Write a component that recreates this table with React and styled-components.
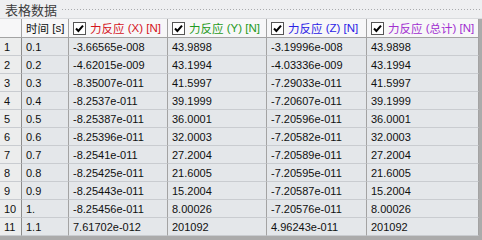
import styled, { createGlobalStyle } from "styled-components";

const GlobalStyle = createGlobalStyle`
  html, body {
    margin: 0;
    padding: 0;
    background: #ababab;
  }
  body {
    font-family: "Liberation Sans", "Noto Sans CJK SC", sans-serif;
  }
`;

const rows = [
  ["0.1", "-3.66565e-008", "43.9898", "-3.19996e-008", "43.9898"],
  ["0.2", "-4.62015e-009", "43.1994", "-4.03336e-009", "43.1994"],
  ["0.3", "-8.35007e-011", "41.5997", "-7.29033e-011", "41.5997"],
  ["0.4", "-8.2537e-011", "39.1999", "-7.20607e-011", "39.1999"],
  ["0.5", "-8.25387e-011", "36.0001", "-7.20596e-011", "36.0001"],
  ["0.6", "-8.25396e-011", "32.0003", "-7.20582e-011", "32.0003"],
  ["0.7", "-8.2541e-011", "27.2004", "-7.20589e-011", "27.2004"],
  ["0.8", "-8.25425e-011", "21.6005", "-7.20595e-011", "21.6005"],
  ["0.9", "-8.25443e-011", "15.2004", "-7.20587e-011", "15.2004"],
  ["1.", "-8.25456e-011", "8.00026", "-7.20576e-011", "8.00026"],
  ["1.1", "7.61702e-012", "201092", "4.96243e-011", "201092"],
];

const forceColumns = [
  { axis: "X", color: "#d4141c" },
  { axis: "Y", color: "#1f9a22" },
  { axis: "Z", color: "#2a22e6" },
  { axis: "总计", color: "#a12fd0" },
];

export default function App() {
  return (
    <>
      <GlobalStyle />
      <Panel>
        <TitleBar>
          <Title>表格数据</Title>
          <Dots />
        </TitleBar>
        <Grid>
          <HeadCell />
          <HeadCell>
            <Cjk>时间</Cjk>&nbsp;[s]
          </HeadCell>
          {forceColumns.map((c) => (
            <HeadCell key={c.axis} $color={c.color}>
              <CheckBox>
                <svg width="11" height="11" viewBox="0 0 11 11">
                  <path d="M2 5.5 L4.4 8 L9 2.6" fill="none" stroke="#000" strokeWidth="2" />
                </svg>
              </CheckBox>
              <Cjk>力反应</Cjk>&nbsp;(<AxisLabel>{c.axis}</AxisLabel>)&nbsp;[N]
            </HeadCell>
          ))}
          {rows.map((r, i) => (
            <Row key={i}>
              <IndexCell>{i + 1}</IndexCell>
              {r.map((v, j) => (
                <Cell key={j}>{v}</Cell>
              ))}
            </Row>
          ))}
        </Grid>
      </Panel>
    </>
  );
}

const Panel = styled.div`
  width: 482px;
  height: 240px;
  overflow: hidden;
  display: flex;
  flex-direction: column;
`;

const TitleBar = styled.div`
  height: 19px;
  background: #eeeff1;
  display: flex;
  align-items: center;
  padding-left: 5px;
  gap: 4px;
  box-sizing: border-box;
  border-bottom: 1px solid #d9dbde;
`;

const Title = styled.span`
  font-family: "Noto Sans CJK SC", sans-serif;
  font-size: 13px;
  color: #3c3c3c;
  line-height: 1;
`;

const Dots = styled.div`
  flex: 1;
  height: 3px;
  margin-right: 2px;
  background-image: radial-gradient(circle, #a9abae 0.7px, transparent 0.8px);
  background-size: 3px 3px;
`;

const Grid = styled.div`
  width: 479px;
  display: grid;
  grid-template-columns: 22px 47px 99px 99px 100px 112px;
  grid-template-rows: 19px;
  grid-auto-rows: 18px;
  background: #e4e7ea;
`;

const Row = styled.div`
  display: contents;
`;

const BaseCell = styled.div`
  box-sizing: border-box;
  border-right: 1px solid #a3a3a3;
  border-bottom: 1px solid #c9ccd0;
  display: flex;
  align-items: center;
  padding-left: 4px;
  font-size: 11px;
  color: #101010;
  white-space: nowrap;
  overflow: hidden;
`;

const HeadCell = styled(BaseCell)`
  background: #f7f7f8;
  border-bottom: 1px solid #a3a3a3;
  color: ${(p) => p.$color || "#101010"};
  font-size: 11.5px;
`;

const Cjk = styled.span`
  font-family: "Noto Sans CJK SC", sans-serif;
  font-size: 11.5px;
`;

const AxisLabel = styled.span`
  font-family: "Liberation Sans", "Noto Sans CJK SC", sans-serif;
`;

const CheckBox = styled.span`
  width: 13px;
  height: 13px;
  box-sizing: border-box;
  border: 1px solid #555;
  background: #fff;
  display: inline-flex;
  align-items: center;
  justify-content: center;
  margin-right: 4px;
  flex-shrink: 0;
`;

const IndexCell = styled(BaseCell)`
  background: #eceded;
  border-right: 1px solid #8d8d8d;
`;

const Cell = styled(BaseCell)``;
